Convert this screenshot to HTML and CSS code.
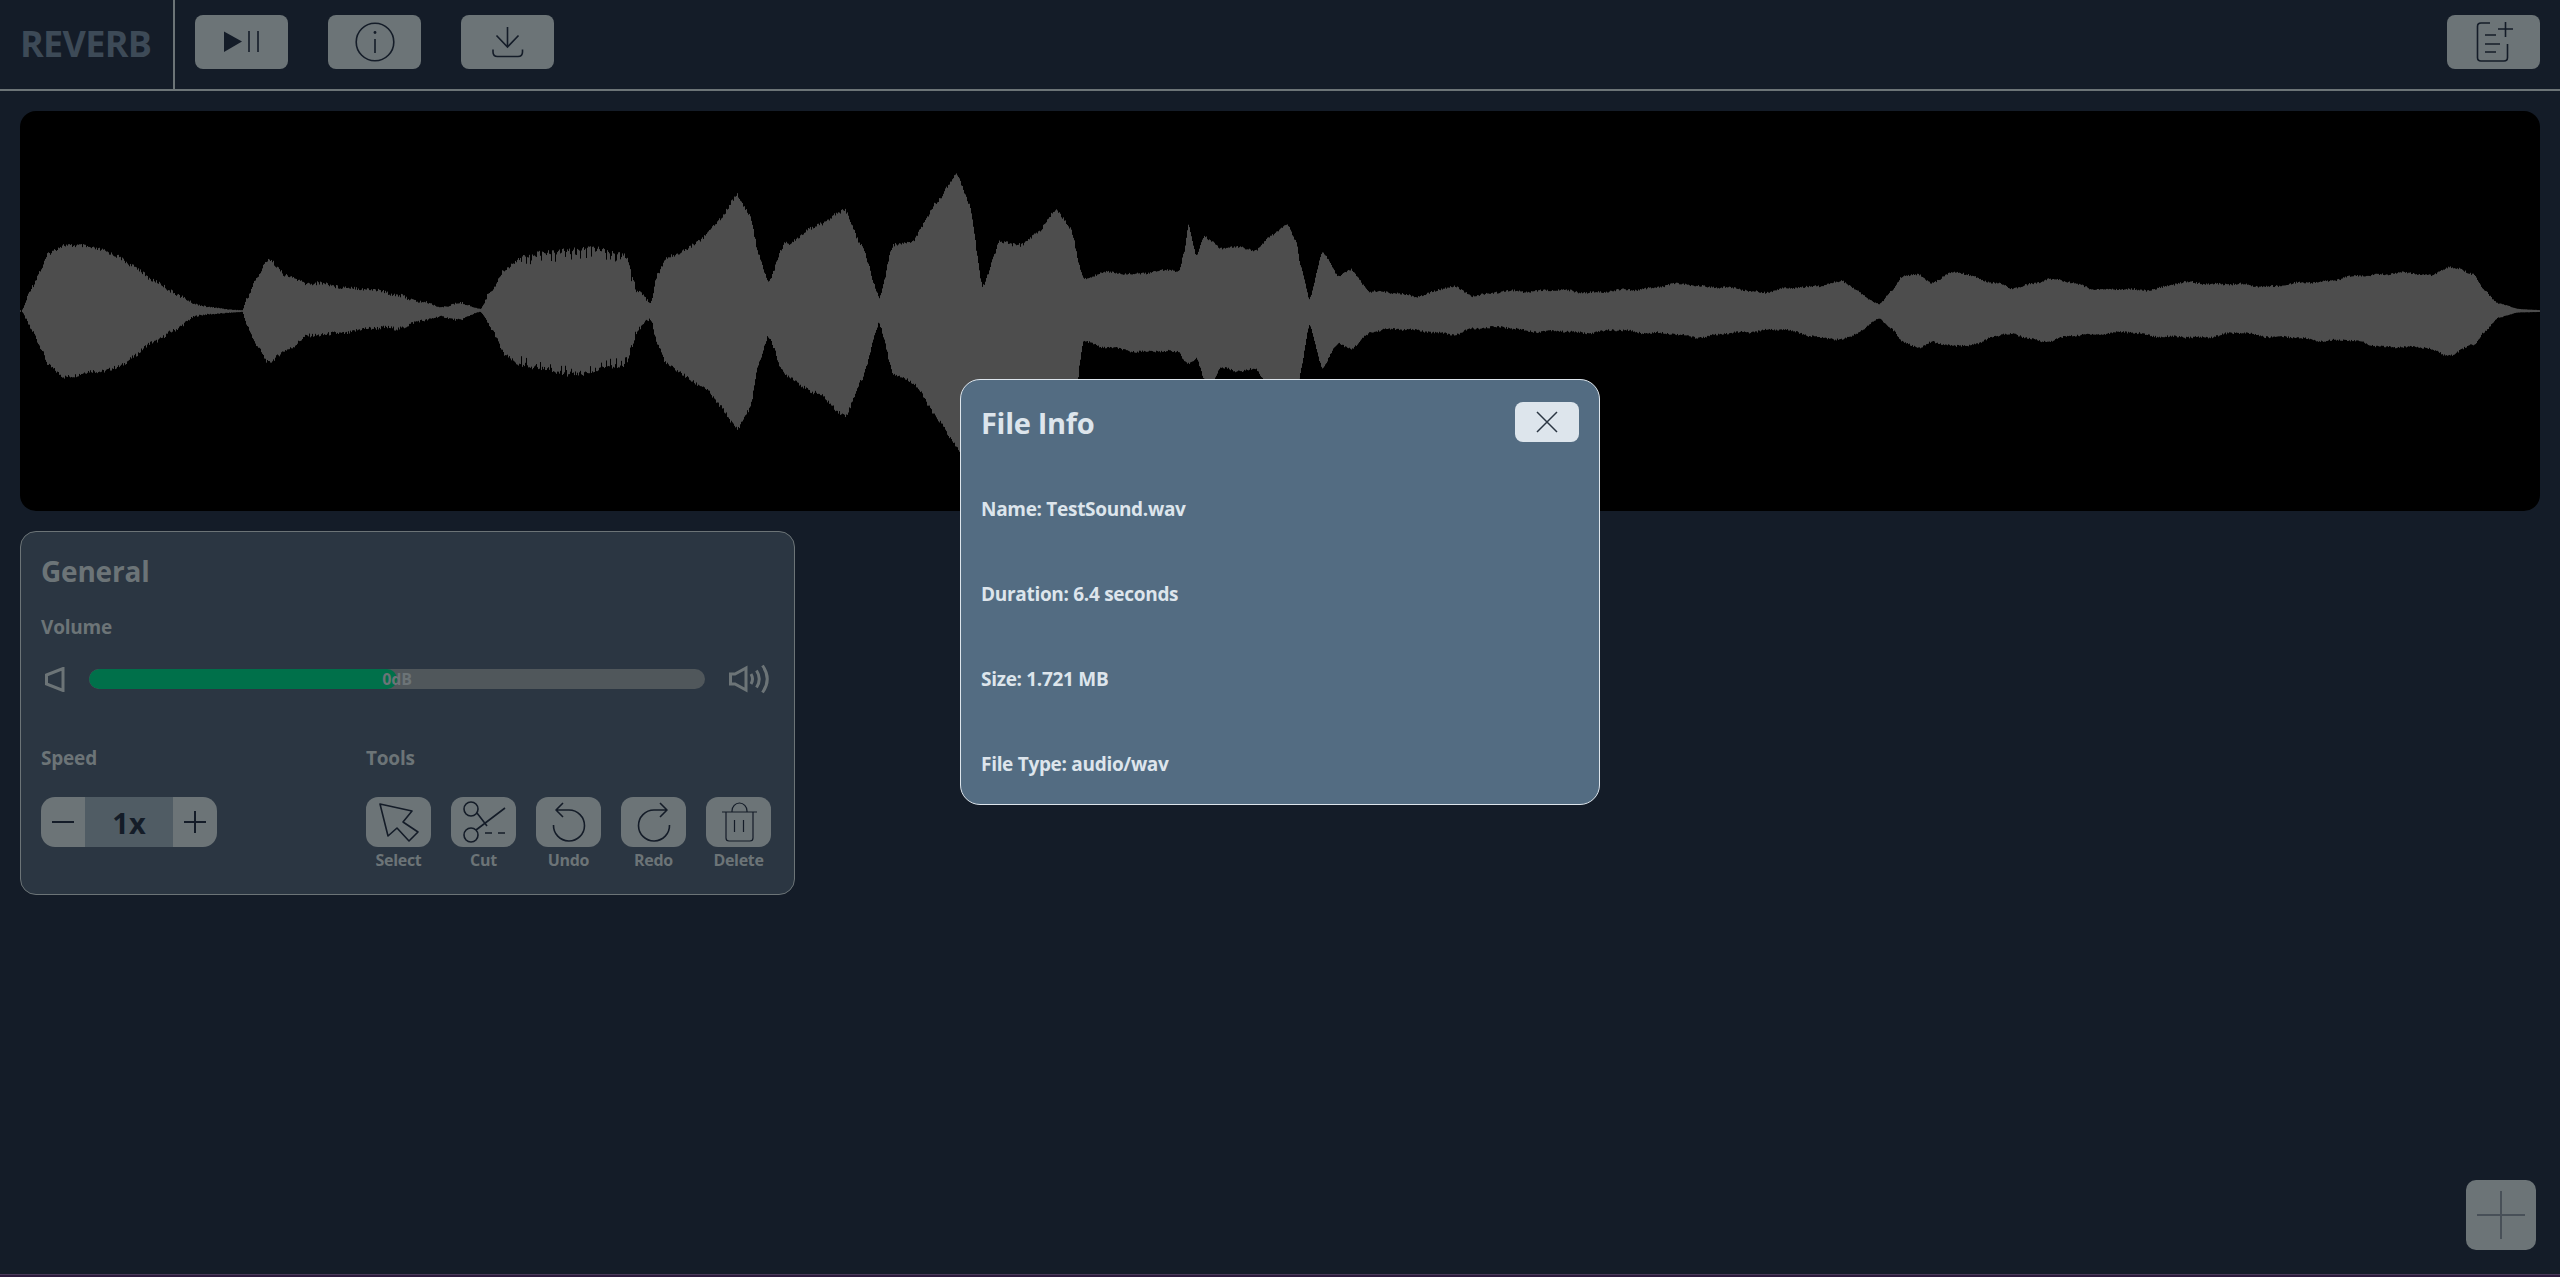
FILE: index.html
```html
<!DOCTYPE html>
<html lang="en">
<head>
    <meta charset="UTF-8">
    <meta name="viewport" content="width=device-width, initial-scale=1.0">
    <title>Reverb</title>
    <link rel="stylesheet" href="styles.css">
</head>
<body>
    <header class="topbar">
        <div class="logo">REVERB</div>
        <div class="topbar-buttons">
            <button class="btn btn-top" type="button">
                <svg width="36" height="22" viewBox="0 0 36 22"><path class="solid" d="M0 0.5 L18 10.5 L0 21 Z"/><path d="M25 0 V21 M34 0 V21"/></svg>
            </button>
            <button class="btn btn-top" type="button">
                <svg width="40" height="40" viewBox="0 0 40 40"><circle cx="20" cy="20" r="18.800"/><path d="M20 17 V31"/><circle class="solid" cx="20" cy="10.500" r="1.400"/></svg>
            </button>
            <button class="btn btn-top" type="button">
                <svg width="32" height="32" viewBox="0 0 32 32"><path d="M15.500 1 V21 M4.500 9.500 L15.500 21 L26.500 9.500"/><path d="M1 23.500 V26 Q1 30.500 5.500 30.500 H26 Q30.500 30.500 30.500 26 V23.500"/></svg>
            </button>
        </div>
        <button class="btn btn-top btn-new" type="button">
            <svg width="38" height="42" viewBox="0 0 38 42"><path d="M14 2 H5 Q1.500 2 1.500 5.500 V36.500 Q1.500 40 5 40 H28 Q31.500 40 31.500 36.500 V23"/><path d="M9 14 H20 M9 23 H24 M9 31 H20"/><path d="M22 8 H37 M29.500 1 V16"/></svg>
        </button>
    </header>

    <main class="content">
        <div class="waveform"><canvas id="wave" width="2520" height="400"></canvas></div>

        <section class="panel">
            <h2>General</h2>
            <div class="label label-volume">Volume</div>
            <div class="volume-row">
                <svg class="speaker-low" width="20" height="25" viewBox="0 0 20 25"><path d="M1.500 8 L18 1.500 V23.500 L1.500 17 Z"/></svg>
                <div class="slider"><div class="slider-fill"></div><span class="slider-text">0dB</span></div>
                <svg class="speaker-high" width="40" height="30" viewBox="0 0 40 30"><path d="M1.500 10 H6 L17 4 V26 L6 20 H1.500 Z"/><path d="M22 10 Q25 15 22 20 M27.500 6.500 Q33 15 27.500 23.500 M33.500 1.500 Q43 15 33.500 28.500"/></svg>
            </div>
            <div class="controls">
                <div class="speed">
                    <div class="label">Speed</div>
                    <div class="stepper">
                        <button class="btn step-btn" type="button"><svg width="24" height="24" viewBox="0 0 24 24"><path d="M1 12 H23"/></svg></button>
                        <div class="step-value">1x</div>
                        <button class="btn step-btn" type="button"><svg width="24" height="24" viewBox="0 0 24 24"><path d="M1 12 H23 M12 1 V23"/></svg></button>
                    </div>
                </div>
                <div class="tools">
                    <div class="label">Tools</div>
                    <div class="tool-list">
                        <div class="tool">
                            <button class="btn tool-btn" type="button"><svg width="65" height="50" viewBox="0 0 65 50"><path d="M14 7 L46 14 L37 25 L52 35 L43 44 L31 31 L22 39 Z"/></svg></button>
                            <span>Select</span>
                        </div>
                        <div class="tool">
                            <button class="btn tool-btn" type="button"><svg width="65" height="50" viewBox="0 0 65 50"><circle cx="20" cy="12" r="7"/><circle cx="20" cy="38" r="7"/><path d="M26 16 L36 29 M25 33 L54 11 M34 36 H41 M47 36 H54"/></svg></button>
                            <span>Cut</span>
                        </div>
                        <div class="tool">
                            <button class="btn tool-btn" type="button"><svg width="65" height="50" viewBox="0 0 65 50"><path d="M17.500 28 A15.500 15.500 0 1 0 33 13 H20 M27 6 L20 13 L27 20"/></svg></button>
                            <span>Undo</span>
                        </div>
                        <div class="tool">
                            <button class="btn tool-btn" type="button"><svg width="65" height="50" viewBox="0 0 65 50"><path d="M48.500 28 A15.500 15.500 0 1 1 33 13 H46 M39 6 L46 13 L39 20"/></svg></button>
                            <span>Redo</span>
                        </div>
                        <div class="tool">
                            <button class="btn tool-btn" type="button"><svg class="icon-thin" width="65" height="50" viewBox="0 0 65 50"><path d="M16 15 H51 M20 15 V41 Q20 44 23 44 H44 Q47 44 47 41 V15 M26 15 V14 A7.500 8 0 0 1 41 14 V15 M28.500 23 V35 M37.500 23 V35"/></svg></button>
                            <span>Delete</span>
                        </div>
                    </div>
                </div>
            </div>
        </section>
    </main>

    <button class="btn btn-add" type="button">
        <svg width="48" height="48" viewBox="0 0 48 48"><path d="M0 24 H48 M24 0 V48"/></svg>
    </button>

    <div class="modal">
        <div class="modal-head">
            <h3>File Info</h3>
            <button class="modal-close" type="button">
                <svg width="22" height="22" viewBox="0 0 22 22"><path d="M1 1 L21 21 M21 1 L1 21"/></svg>
            </button>
        </div>
        <p>Name: TestSound.wav</p>
        <p>Duration: 6.4 seconds</p>
        <p>Size: 1.721 MB</p>
        <p>File Type: audio/wav</p>
    </div>

    <div class="bottom-strip"></div>

    <script src="wave.js"></script>
</body>
</html>
```

FILE: styles.css
```css
* {
    box-sizing: border-box;
}
body {
    font-family: "Open Sans", "Noto Sans", sans-serif;
    background-color: #141c28;
    color: #6c7477;
    height: 100vh;
    margin: 0;
    overflow: hidden;
}
svg {
    display: block;
    fill: none;
    stroke: #141c28;
    stroke-width: 1.6;
}
svg .solid {
    fill: #141c28;
    stroke: none;
}
.btn {
    display: flex;
    align-items: center;
    justify-content: center;
    background: #6c7477;
    border: none;
    padding: 0;
    cursor: pointer;
}

.topbar {
    display: flex;
    align-items: center;
    height: 91px;
    padding-right: 20px;
    border-bottom: 2px solid #6c7477;
}
.logo {
    display: flex;
    align-items: center;
    width: 175px;
    height: 100%;
    padding-left: 20px;
    padding-bottom: 3px;
    border-right: 2px solid #6c7477;
    color: #3d4a57;
    font-size: 36px;
    font-weight: 700;
    letter-spacing: -0.7px;
}
.topbar-buttons {
    display: flex;
    gap: 40px;
    margin-left: 20px;
    margin-bottom: 5px;
    flex: 1;
}
.btn-top {
    width: 93px;
    height: 54px;
    border-radius: 8px;
}
.btn-new {
    margin-bottom: 5px;
}
.btn-new svg {
    margin-left: 2px;
}

.content {
    padding: 20px;
}
.waveform {
    height: 400px;
    background: #000;
    border-radius: 16px;
    overflow: hidden;
}
.waveform canvas {
    display: block;
}

.panel {
    width: 775px;
    height: 364px;
    margin-top: 20px;
    padding: 20px;
    background: #2b3642;
    border: 1px solid #6c7477;
    border-radius: 16px;
}
.panel h2 {
    margin: 0;
    height: 40px;
    line-height: 39px;
    font-size: 28px;
    font-weight: 700;
    letter-spacing: -0.2px;
}
.label {
    height: 30px;
    line-height: 30px;
    font-size: 19px;
    font-weight: 700;
    letter-spacing: -0.2px;
}
.label-volume {
    margin-top: 20px;
}
.volume-row {
    display: flex;
    align-items: center;
    height: 30px;
    margin-top: 22px;
    padding-left: 4px;
}
.speaker-low {
    stroke: #6c7477;
    stroke-width: 3;
    margin-right: 24px;
}
.speaker-high {
    stroke: #6c7477;
    stroke-width: 3;
    margin-left: 24px;
}
.slider {
    position: relative;
    width: 616px;
    height: 20px;
    background: #50575b;
    border-radius: 10px;
    overflow: hidden;
}
.slider-fill {
    width: 50%;
    height: 100%;
    background: #00704a;
    border-radius: 10px;
}
.slider-text {
    position: absolute;
    inset: 0;
    text-align: center;
    line-height: 21px;
    font-size: 16px;
    font-weight: 700;
    letter-spacing: -0.2px;
}
.controls {
    display: flex;
    margin-top: 49px;
}
.speed {
    width: 325px;
}
.stepper {
    display: flex;
    width: 176px;
    height: 50px;
    margin-top: 24px;
    border-radius: 14px;
    overflow: hidden;
}
.step-btn {
    width: 44px;
}
.step-btn svg {
    stroke-width: 2;
}
.step-value {
    width: 88px;
    background: #505c64;
    color: #141c28;
    text-align: center;
    line-height: 52px;
    font-size: 29px;
    font-weight: 700;
}
.tool-list {
    display: flex;
    gap: 20px;
    margin-top: 24px;
}
.tool {
    width: 65px;
    text-align: center;
}
.tool span {
    display: block;
    margin-top: 3px;
    line-height: 20px;
    font-size: 16px;
    font-weight: 700;
    letter-spacing: -0.3px;
}
.tool-btn {
    width: 65px;
    height: 50px;
    border-radius: 12px;
}
.tool-btn svg {
    stroke-linejoin: round;
}
.tool-btn .icon-thin {
    stroke-width: 1.2;
}

.btn-add {
    position: fixed;
    right: 24px;
    bottom: 27px;
    width: 70px;
    height: 70px;
    border-radius: 10px;
}
.btn-add svg {
    stroke: #485058;
    stroke-width: 2;
}

.modal {
    position: fixed;
    left: 960px;
    top: 379px;
    width: 640px;
    height: 426px;
    padding: 20px;
    background: #536c82;
    border: 1px solid #dde5ec;
    border-radius: 20px;
    color: #dde5ec;
}
.modal-head {
    display: flex;
    align-items: center;
    justify-content: space-between;
    height: 44px;
}
.modal-head h3 {
    margin: 0;
    font-size: 29px;
    font-weight: 700;
    letter-spacing: -0.3px;
}
.modal-close {
    width: 64px;
    height: 40px;
    display: flex;
    align-items: center;
    justify-content: center;
    padding: 0;
    background: #dde5ec;
    border: none;
    border-radius: 8px;
    cursor: pointer;
}
.modal-close svg {
    stroke: #2b3642;
    stroke-width: 1.5;
}
.modal p {
    margin: 0 0 55px;
    height: 30px;
    line-height: 30px;
    font-size: 19px;
    font-weight: 700;
    letter-spacing: -0.3px;
}
.modal-head + p {
    margin-top: 50px;
}

.bottom-strip {
    position: fixed;
    left: 0;
    right: 0;
    bottom: 0;
    height: 3px;
    background: #2d1b3d;
    border-top: 1px solid #4a3a5a;
}
```

FILE: wave.js
```js
// envelope of the sound: [x, top y, bottom y], y measured around the centre line
const ENVELOPE = [
    [1, 0, 0], [12, 24, 23], [20, 41, 39], [28, 58, 56], [44, 69, 69], [76, 65, 64], [98, 59, 57],
    [114, 46, 46], [133, 31, 32], [152, 21, 21], [175, 7, 7], [190, 4, 4], [222, 1, 1], [226, 14, 16],
    [235, 34, 36], [248, 54, 53], [267, 38, 38], [286, 28, 27], [324, 26, 24], [375, 21, 19],
    [401, 11, 11], [420, 4, 6], [440, 9, 9], [460, 2, 1], [471, 21, 22], [484, 44, 46], [503, 59, 59],
    [560, 65, 64], [605, 58, 56], [618, 21, 21], [630, 9, 11], [637, 38, 38], [646, 56, 56], [681, 74, 76],
    [700, 94, 96], [717, 118, 118], [729, 98, 99], [739, 54, 53], [748, 29, 29], [764, 68, 66],
    [796, 88, 86], [825, 104, 106], [841, 68, 69], [859, 14, 14], [873, 66, 64], [892, 71, 72],
    [917, 111, 112], [937, 141, 140], [949, 111, 156], [962, 28, 180], [980, 71, 170], [1002, 68, 160],
    [1018, 80, 150], [1036, 101, 150], [1050, 85, 130], [1063, 34, 32], [1082, 40, 39], [1159, 40, 41],
    [1164, 60, 50], [1168, 86, 52], [1176, 56, 48], [1184, 76, 70], [1190, 70, 80], [1200, 62, 60],
    [1215, 66, 62], [1235, 64, 59], [1250, 76, 80], [1267, 88, 100], [1276, 70, 90], [1280, 47, 60],
    [1289, 14, 13], [1302, 58, 57], [1318, 34, 34], [1331, 41, 39], [1350, 21, 23], [1395, 18, 19],
    [1433, 24, 24], [1452, 16, 17], [1522, 23, 22], [1592, 19, 20], [1669, 29, 27], [1745, 19, 19],
    [1822, 31, 31], [1859, 8, 7], [1871, 19, 18], [1882, 34, 32], [1899, 36, 37], [1911, 29, 32],
    [1935, 40, 39], [1957, 36, 34], [1974, 31, 25], [1993, 23, 24], [2027, 32, 30], [2071, 24, 25],
    [2119, 23, 23], [2168, 28, 27], [2216, 27, 25], [2265, 28, 27], [2313, 31, 29], [2376, 40, 39],
    [2410, 38, 37], [2427, 46, 45], [2454, 36, 34], [2463, 21, 21], [2478, 8, 7], [2498, 2, 2], [2520, 1, 1]
];

// eased between points, so the lobes come out round and not as straight lines
function envelopeAt(x, side) {
    for (let i = 1; i < ENVELOPE.length; i++) {
        if (x <= ENVELOPE[i][0]) {
            const a = ENVELOPE[i - 1];
            const b = ENVELOPE[i];
            const t = (x - a[0]) / (b[0] - a[0]);
            const eased = t * t * (3 - 2 * t);
            return a[side] + (b[side] - a[side]) * (t + eased) / 2;
        }
    }
    return 1;
}

// small repeatable noise so the outline looks like real audio
function noise(x) {
    const n = Math.sin(x * 12.9898) * 43758.5453;
    return n - Math.floor(n);
}

// slow ripple along the outline, in pixels
function ripple(x) {
    return Math.sin(x / 9) + Math.sin(x / 23 + 1) * 1.4 + Math.sin(x / 4.3) * 0.6;
}

const canvas = document.getElementById("wave");
const ctx = canvas.getContext("2d");
const centre = 200;
ctx.fillStyle = "#4d4d4d";

for (let x = 0; x < canvas.width; x++) {
    let top = envelopeAt(x, 1);
    let bottom = envelopeAt(x, 2);

    // voiced parts on the left have a comb-like edge, the tail is smoother
    let spike = x < 1060 ? 4 : 2;
    if (x > 500 && x < 620 && x % 5 < 2) {
        spike = 12;
    }
    const fadeTop = Math.min(1, top / 15);
    const fadeBottom = Math.min(1, bottom / 15);
    top += (ripple(x) - noise(x) * spike) * fadeTop;
    bottom += (ripple(x + 31) - noise(x + 7) * spike) * fadeBottom;

    ctx.fillRect(x, centre - top, 1, top + bottom);
}
```
